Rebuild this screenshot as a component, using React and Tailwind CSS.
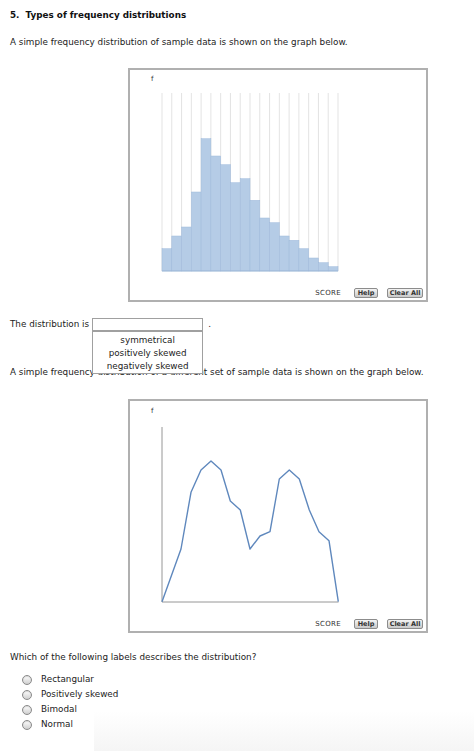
import React from "react";

const FONT = { fontFamily: '"DejaVu Sans", Verdana, sans-serif' };

const heights = [22.3, 35, 44, 79, 132.3, 115, 106.3, 88.3, 92.3, 70.7, 53, 48.3, 35, 30.7, 22.3, 13, 8.3, 4.3];
const X0 = 162;
const BW = 176 / 18;

const linePts = [
  [162, 601.7], [181, 549], [191, 492.3], [201, 470], [211, 461], [221, 470], [230.3, 501], [240.3, 510],
  [250, 549], [260, 536], [270, 531.7], [279.3, 479], [289.3, 470], [299.3, 479], [309.3, 510], [319, 531.7],
  [329, 540.7], [338.3, 601.7],
];

function Btn({ children, w }) {
  return (
    <div
      className={`${w} h-[10px] flex items-center justify-center rounded-[2px] border border-[#8c8c8c] bg-gradient-to-b from-[#f4f4f4] to-[#c9c9c9] text-[6.5px] font-bold text-[#333] leading-none`}
    >
      {children}
    </div>
  );
}

function ButtonRow() {
  return (
    <div className="h-[18px] flex items-end justify-end pb-[2px] pr-[3px]">
      <span className="text-[7px] text-[#333] leading-[10px] mr-[13px] tracking-[0.3px]">SCORE</span>
      <Btn w="w-[24px]">Help</Btn>
      <div className="w-[9px]" />
      <Btn w="w-[36px]">Clear All</Btn>
    </div>
  );
}

function Histogram() {
  return (
    <div className="ml-[118px] w-[300px] h-[234px] border-2 border-[#b0b0b0] flex flex-col bg-white">
      <svg width="296" height="212" viewBox="130 70 296 212">
        <text x="151" y="81" fontSize="7" fill="#333" fontFamily="DejaVu Sans">f</text>
        {Array.from({ length: 19 }).map((_, i) => (
          <line key={i} x1={X0 + i * BW} y1={93} x2={X0 + i * BW} y2={271} stroke="#dcdcdc" strokeWidth="0.8" />
        ))}
        {heights.map((h, i) => (
          <rect key={i} x={X0 + i * BW} y={271 - h} width={BW} height={h} fill="#b5cce6" stroke="#9fbadb" strokeWidth="0.5" />
        ))}
        <line x1={X0} y1={271} x2={338} y2={271} stroke="#9ab4d4" strokeWidth="0.8" />
      </svg>
      <ButtonRow />
    </div>
  );
}

function LineGraph() {
  return (
    <div className="ml-[118px] w-[300px] h-[234px] border-2 border-[#b0b0b0] flex flex-col bg-white">
      <svg width="296" height="212" viewBox="130 401 296 212">
        <text x="151" y="413" fontSize="7" fill="#333" fontFamily="DejaVu Sans">f</text>
        <line x1={162} y1={427} x2={162} y2={602} stroke="#8a8a8a" strokeWidth="0.9" />
        <line x1={162} y1={602} x2={338.5} y2={602} stroke="#8a8a8a" strokeWidth="0.9" />
        <polyline
          points={linePts.map((p) => p.join(",")).join(" ")}
          fill="none"
          stroke="#5f88bd"
          strokeWidth="1.4"
          strokeLinejoin="round"
        />
      </svg>
      <ButtonRow />
    </div>
  );
}

function Radio({ label }) {
  return (
    <div className="h-[15px] flex items-center">
      <div className="ml-[12px] w-[10px] h-[10px] rounded-full border border-[#8a8a8a] bg-gradient-to-b from-[#ffffff] to-[#cfcfcf] shadow-[inset_0_1px_1px_rgba(0,0,0,0.15)]" />
      <span className="ml-[9px] text-[8.8px] leading-[15px] text-[#222]">{label}</span>
    </div>
  );
}

export default function App() {
  return (
    <div className="w-[474px] h-[751px] bg-white overflow-hidden relative text-[#222]" style={FONT}>
      <div className="px-[10px] flex flex-col">
        <div className="mt-[10px] text-[8.8px] leading-[10px] font-bold text-[#111] whitespace-pre">5.  Types of frequency distributions</div>
        <div className="mt-[17px] text-[8.8px] leading-[10px] whitespace-nowrap">A simple frequency distribution of sample data is shown on the graph below.</div>
        <div className="mt-[21px]">
          <Histogram />
        </div>
        <div className="mt-[16px] h-[13px] flex items-center text-[8.8px]">
          <span className="leading-[13px] whitespace-nowrap">The distribution is</span>
          <div className="relative ml-[3px] w-[111px] h-[13px] border border-[#a0a0a0] bg-white">
            <div className="absolute left-[-1px] top-[12px] w-[111px] h-[43px] border border-[#a0a0a0] bg-white z-10 flex flex-col items-center pt-[1px] whitespace-nowrap">
              <span className="h-[14px] leading-[14px]">symmetrical</span>
              <span className="h-[13px] leading-[13px]">positively skewed</span>
              <span className="h-[13px] leading-[13px]">negatively skewed</span>
            </div>
          </div>
          <span className="ml-[5px]">.</span>
        </div>
        <div className="mt-[36px] text-[8.8px] leading-[10px] whitespace-nowrap">
          A simple frequency distribution of a different set of sample data is shown on the graph below.
        </div>
        <div className="mt-[22px]">
          <LineGraph />
        </div>
        <div className="mt-[19px] text-[8.8px] leading-[10px] whitespace-nowrap">Which of the following labels describes the distribution?</div>
        <div className="mt-[10px] flex flex-col">
          <Radio label="Rectangular" />
          <Radio label="Positively skewed" />
          <Radio label="Bimodal" />
          <Radio label="Normal" />
        </div>
      </div>
      <div className="absolute right-0 bottom-0 w-[380px] h-[40px] bg-gradient-to-b from-transparent to-[#f5f5f5] pointer-events-none" />
    </div>
  );
}
